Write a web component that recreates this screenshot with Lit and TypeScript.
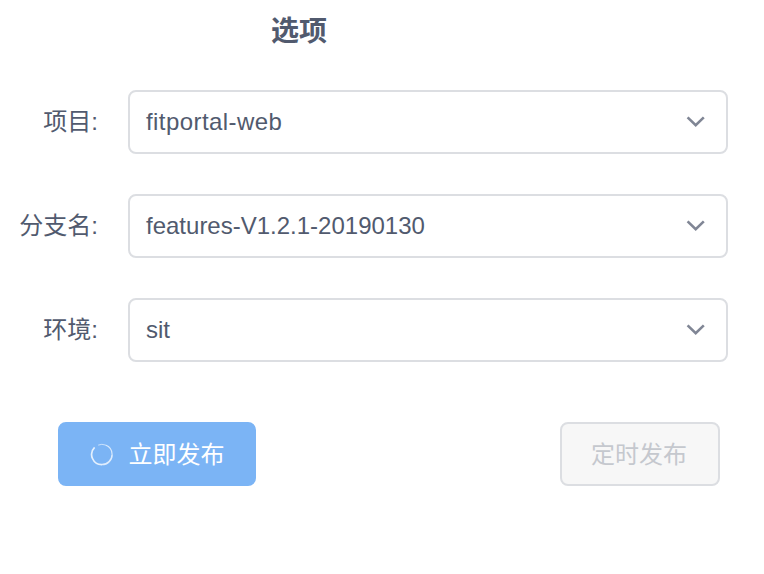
import { LitElement, html, css } from "lit";
import { customElement, property } from "lit/decorators.js";

@customElement("select-field")
class SelectField extends LitElement {
  @property() label = "";
  @property() value = "";

  static styles = css`
    :host {
      display: flex;
      align-items: center;
      height: 64px;
    }
    .label {
      width: 98px;
      margin-right: 30px;
      text-align: right;
      white-space: nowrap;
    }
    .box {
      box-sizing: border-box;
      width: 600px;
      height: 64px;
      padding: 0 20px 0 16px;
      border: 2px solid #dcdee2;
      border-radius: 8px;
      background: #fff;
      display: flex;
      align-items: center;
      justify-content: space-between;
    }
    .value {
      letter-spacing: var(--value-spacing, 0);
    }
    svg {
      display: block;
      width: 20px;
      height: 14px;
    }
  `;

  render() {
    return html`
      <span class="label">${this.label}:</span>
      <div class="box">
        <span class="value">${this.value}</span>
        <svg viewBox="0 0 20 14" fill="none" stroke="#808695" stroke-width="2.6">
          <path d="M1.6 2.4 L9.7 10.3 L17.8 2.4" />
        </svg>
      </div>
    `;
  }
}

@customElement("app-root")
class AppRoot extends LitElement {
  static styles = css`
    :host {
      display: block;
      box-sizing: border-box;
      width: 764px;
      height: 574px;
      background: #fff;
      color: #515a6e;
      font: 24px/36px "Liberation Sans", "Noto Sans CJK SC", sans-serif;
    }
    h1 {
      margin: 0;
      width: 598px;
      height: 90px;
      box-sizing: border-box;
      padding-top: 11px;
      font-size: 28px;
      line-height: 42px;
      font-weight: 700;
      text-align: center;
    }
    .fields {
      display: flex;
      flex-direction: column;
      gap: 40px;
    }
    .project {
      --value-spacing: 0.42px;
    }
    .actions {
      display: flex;
      justify-content: space-between;
      margin: 60px 44px 0 58px;
    }
    button {
      box-sizing: border-box;
      height: 64px;
      padding: 0;
      border: 2px solid #dcdee2;
      border-radius: 8px;
      font: inherit;
      display: flex;
      align-items: center;
      justify-content: center;
    }
    .publish {
      width: 198px;
      color: #fff;
      background: #7bb4f5;
      border-color: #7bb4f5;
      gap: 15px;
    }
    .schedule {
      width: 160px;
      padding-right: 2px;
      color: #c5c8ce;
      background: #f7f7f7;
    }
    .text {
      padding-top: 1px;
    }
    svg {
      display: block;
      width: 24px;
      height: 24px;
    }
  `;

  render() {
    return html`
      <h1>选项</h1>
      <div class="fields">
        <select-field class="project" label="项目" value="fitportal-web"></select-field>
        <select-field label="分支名" value="features-V1.2.1-20190130"></select-field>
        <select-field label="环境" value="sit"></select-field>
      </div>
      <div class="actions">
        <button class="publish">
          <svg viewBox="0 0 24 24" fill="none" stroke="#fff">
            <path d="M4.6 5.4 A10.1 10.1 0 0 0 12 22.6" stroke-width="1.7" stroke-opacity=".8" />
            <path d="M12 22.6 A10.1 10.1 0 0 0 22.1 12.5" stroke-width="1.5" stroke-opacity=".75" />
            <path d="M22.1 12.5 A10.1 10.1 0 0 0 15.5 3" stroke-width="1.2" stroke-opacity=".7" />
            <path d="M15.5 3 A10.1 10.1 0 0 0 8.2 3.1" stroke-width=".9" stroke-opacity=".65" />
          </svg>
          <span class="text">立即发布</span>
        </button>
        <button class="schedule" disabled><span class="text">定时发布</span></button>
      </div>
    `;
  }
}
